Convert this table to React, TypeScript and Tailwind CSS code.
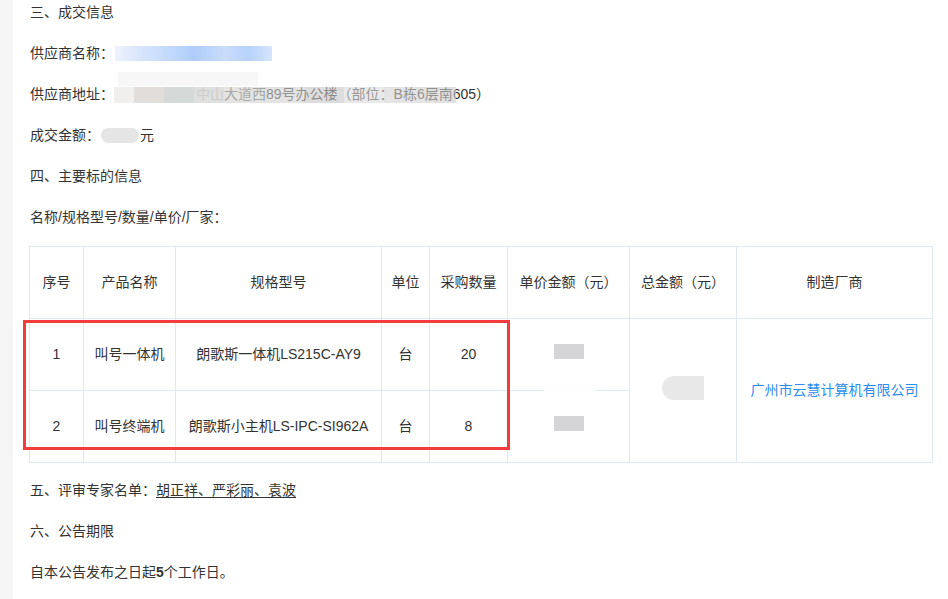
import React from "react";

const cols = [54, 92, 206, 48, 78, 122, 107, 196];
const heads = ["序号", "产品名称", "规格型号", "单位", "采购数量", "单价金额（元）", "总金额（元）", "制造厂商"];

const rows = [
	{ no: "1", name: "叫号一体机", model: "朗歌斯一体机LS215C-AY9", unit: "台", qty: "20" },
	{ no: "2", name: "叫号终端机", model: "朗歌斯小主机LS-IPC-SI962A", unit: "台", qty: "8" },
];

const cell = "border border-[#dfe9f5] text-center align-middle";

export default function App() {
	return (
		<div
			className="flex min-h-[599px] w-[948px] bg-white text-[14px] text-[#333]"
			style={{ fontFamily: '"Liberation Sans", "Noto Sans CJK SC", sans-serif' }}>
			<div className="w-[13px] shrink-0 bg-[#f5f5f5]" />
			<div className="flex-1 pl-[17px] pt-[2px]">
				<p className="mb-[20px] leading-[21px]">三、成交信息</p>

				<p className="mb-[20px] flex items-center leading-[21px]">
					供应商名称：
					<span className="ml-[1px] inline-block h-[15px] w-[157px] bg-[linear-gradient(90deg,#eef3fe_0%,#d9e6fd_15%,#bcd6fb_40%,#aecdfb_50%,#c8dcfb_70%,#b8d2fb_85%,#d6e5fd_100%)]" />
				</p>

				<p className="relative mb-[20px] flex items-center leading-[21px]">
					供应商地址：
					<span className="relative inline-block">
						<span className="inline-block w-[82px]" />
						中山大道西89号办公楼（部位：B栋6层南605）
						<span className="absolute left-0 top-[3px] flex h-[16px] w-[342px]">
							<span className="h-full w-[20px] bg-[#f1efee]" />
							<span className="h-full w-[30px] bg-[#e1ddda]" />
							<span className="h-full w-[30px] bg-[#d5dad9]" />
							<span className="h-full w-[30px] bg-[#dcdcda]/90" />
							<span className="h-full w-[40px] bg-[#d8d8d6]/70" />
							<span className="h-full w-[40px] bg-[#d2d2d2]/60" />
							<span className="h-full w-[40px] bg-[#c8c6c6]/60" />
							<span className="h-full w-[40px] bg-[#dadada]/60" />
							<span className="h-full w-[40px] bg-[#d4d2d2]/60" />
							<span className="h-full w-[32px] bg-[#cfcdcd]/60" />
						</span>
						<span className="absolute left-[4px] top-[-12px] h-[14px] w-[140px] bg-[#f7f7f7]" />
					</span>
				</p>

				<p className="mb-[20px] flex items-center leading-[21px]">
					成交金额：
					<span className="ml-[1px] inline-block h-[15px] w-[38px] rounded-full bg-[#e5e5e5]" />
					<span className="ml-[1px]">元</span>
				</p>

				<p className="mb-[20px] leading-[21px]">四、主要标的信息</p>
				<p className="mb-[18px] leading-[21px]">名称/规格型号/数量/单价/厂家：</p>

				<div className="relative ml-[-1px] w-[904px]">
					<table className="w-[904px] table-fixed border-collapse">
						<colgroup>
							{cols.map((w, i) => (
								<col key={i} style={{ width: w }} />
							))}
						</colgroup>
						<thead>
							<tr className="h-[72px]">
								{heads.map((h) => (
									<th key={h} className={`${cell} font-normal`}>
										{h}
									</th>
								))}
							</tr>
						</thead>
						<tbody>
							{rows.map((r, i) => (
								<tr key={r.no} className="h-[72px]">
									<td className={cell}>{r.no}</td>
									<td className={cell}>{r.name}</td>
									<td className={cell}>{r.model}</td>
									<td className={cell}>{r.unit}</td>
									<td className={cell}>{r.qty}</td>
									<td className={cell}>
										<span className="inline-block h-[15px] w-[30px] bg-[#d5d5d7]" />
									</td>
									{i === 0 && (
										<>
											<td rowSpan={2} className={cell}>
												<span className="inline-block h-[24px] w-[42px] rounded-l-full bg-[#e8e8e8]" />
											</td>
											<td rowSpan={2} className={`${cell} text-[#2d8cf0]`}>
												广州市云慧计算机有限公司
											</td>
										</>
									)}
								</tr>
							))}
						</tbody>
					</table>
					{/* blur smear over the unit price column */}
					<div className="absolute left-[515px] top-[137px] h-[16px] w-[52px] bg-white/90" />
					{/* highlight box */}
					<div className="absolute left-[-6px] top-[74px] h-[130px] w-[487px] border-[3px] border-[#f23c3c]" />
				</div>

				<p className="mb-[20px] mt-[17px] leading-[21px]">
					五、评审专家名单：<span className="underline underline-offset-2">胡正祥、严彩丽、袁波</span>
				</p>
				<p className="mb-[20px] leading-[21px]">六、公告期限</p>
				<p className="leading-[21px]">
					自本公告发布之日起<b>5</b>个工作日。
				</p>
			</div>
		</div>
	);
}
